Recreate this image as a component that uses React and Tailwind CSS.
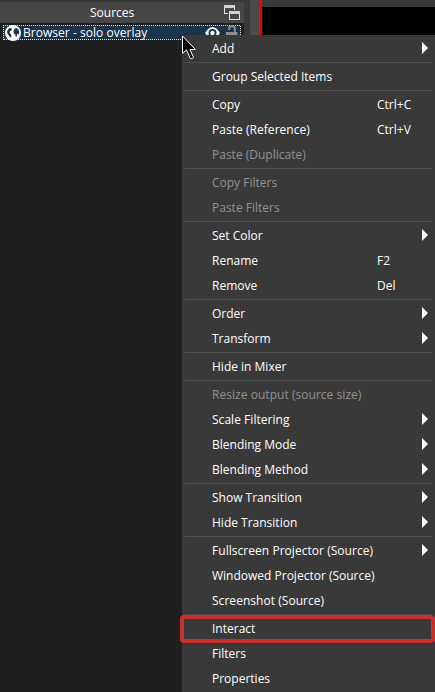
import React from 'react';

const MENU = [
  [{ label: 'Add', sub: true }],
  [{ label: 'Group Selected Items' }],
  [
    { label: 'Copy', keys: 'Ctrl+C' },
    { label: 'Paste (Reference)', keys: 'Ctrl+V', wide: true },
    { label: 'Paste (Duplicate)', disabled: true },
  ],
  [
    { label: 'Copy Filters', disabled: true },
    { label: 'Paste Filters', disabled: true },
  ],
  [
    { label: 'Set Color', sub: true },
    { label: 'Rename', keys: 'F2' },
    { label: 'Remove', keys: 'Del' },
  ],
  [
    { label: 'Order', sub: true },
    { label: 'Transform', sub: true },
  ],
  [{ label: 'Hide in Mixer' }],
  [
    { label: 'Resize output (source size)', disabled: true, wide: true },
    { label: 'Scale Filtering', sub: true, wide: true },
    { label: 'Blending Mode', sub: true },
    { label: 'Blending Method', sub: true },
  ],
  [
    { label: 'Show Transition', sub: true },
    { label: 'Hide Transition', sub: true },
  ],
  [
    { label: 'Fullscreen Projector (Source)', sub: true, wide: true },
    { label: 'Windowed Projector (Source)' },
    { label: 'Screenshot (Source)', wide: true },
  ],
  [
    { label: 'Interact', marked: true },
    { label: 'Filters' },
    { label: 'Properties' },
  ],
];

function MenuItem({ label, keys, sub, disabled, marked, wide }) {
  return (
    <div className={`relative flex h-[25px] items-center pl-[30px] ${disabled ? 'text-[#929292]' : 'text-white'}`}>
      <span className={`w-[165px] whitespace-nowrap ${wide ? 'tracking-[0.04px]' : ''}`}>{label}</span>
      {keys && <span className="whitespace-nowrap">{keys}</span>}
      {sub && (
        <svg className="mr-[7px] mb-px ml-auto h-3 w-[6px]" viewBox="0 0 6 12">
          <path d="M0 0L6 6L0 12Z" fill="#fff" />
        </svg>
      )}
      {marked && (
        <div className="absolute -top-[1px] -left-[2px] h-[28px] w-[255px] rounded-[4px] border-4 border-[#c9302c] shadow-[0_0_1px_#111]" />
      )}
    </div>
  );
}

function ContextMenu() {
  return (
    <div className="absolute top-[35px] left-[182px] h-[657px] w-[253px] bg-[#393939] pt-px">
      {MENU.map((group, i) => (
        <div key={i}>
          {i > 0 && <div className="mr-[3px] ml-[3px] h-[3px] py-px"><div className="h-px bg-[#4f4f4f]" /></div>}
          {group.map((item) => <MenuItem key={item.label} {...item} />)}
        </div>
      ))}
    </div>
  );
}

function GlobeIcon() {
  return (
    <svg className="h-4 w-4 shrink-0" viewBox="0 0 16 16">
      <circle cx="8" cy="8" r="8" fill="#fff" />
      <path d="M2 6.5L3.6 3.8L5.6 3L7 3.8L6.4 5.4L4.8 6.6L4.8 8.2L6.4 9.8L6.2 11.6L5.2 13L4.4 11L2.6 9Z" fill="#19334d" />
      <path d="M8.6 5.4L10 3.4L11.6 3L13.4 4.8L14.2 7.4L13.6 9.4L12.4 8.8L11.8 11.4L10.8 12L10.2 9.2L8.8 8.4Z" fill="#19334d" />
    </svg>
  );
}

function SourcesDock() {
  return (
    <div className="flex h-[692px] w-[244px] flex-col bg-[#1f1f1f]">
      <div className="h-[2px] bg-[#393939]" />
      <div className="bg-[#393939]">
        <div className="flex h-[21px] items-center rounded-t-[3px] bg-[#464646]">
          <span className="ml-[90px]">Sources</span>
          <svg className="mr-1 ml-auto h-4 w-4" viewBox="0 0 16 16">
            <rect x="0.5" y="0.5" width="10" height="8" fill="#464646" stroke="#e3e3e3" />
            <path d="M0 0H11V3H0Z" fill="#d2d2d2" />
            <path d="M4 5H16V16H4Z" fill="#464646" />
            <rect x="5.5" y="6.5" width="10" height="8" fill="#464646" stroke="#e3e3e3" />
            <path d="M5 6H16V9H5Z" fill="#d2d2d2" />
          </svg>
        </div>
      </div>
      <div className="relative mt-[2px] ml-[3px] flex h-[15px] w-[238px] items-center bg-[#19334d]">
        <svg className="absolute inset-0 h-[15px] w-[238px]" viewBox="0 0 238 15">
          <path d="M0 0.5H238M1 14.5H238M0.5 0V15M237.5 1V15" fill="none" stroke="#e0e0e0" strokeDasharray="1 1" />
        </svg>
        <div className="relative ml-[2px] flex items-center">
          <GlobeIcon />
          <span className="ml-[2px] tracking-[0.04px] whitespace-nowrap">Browser - solo overlay</span>
        </div>
        <svg className="absolute top-[2px] left-[202px] h-[12px] w-[15px]" viewBox="0 0 15 12">
          <path d="M0 6Q7.5 -6 15 6Q7.5 18 0 6Z" fill="#fff" />
          <circle cx="7.5" cy="6" r="4" fill="#19334d" />
          <circle cx="7.5" cy="6" r="2.2" fill="#fff" />
        </svg>
        <svg className="absolute top-0 left-[223px] h-[13px] w-3" viewBox="0 0 12 13">
          <path d="M3.2 5V3.6Q3.2 1.1 6 1.1Q8.8 1.1 8.8 3.6V8" fill="none" stroke="#8d8d8d" strokeWidth="2" />
          <path d="M0 7H11.5V13H0Z" fill="#8d8d8d" />
        </svg>
      </div>
    </div>
  );
}

export default function App() {
  return (
    <div className="relative flex h-[692px] w-[435px] overflow-hidden bg-[#393939] font-['Open_Sans','Noto_Sans',sans-serif] text-[12px] leading-[16px] text-white">
      <SourcesDock />
      <div className="ml-[6px] w-[10px] bg-[#4b4b4b]" />
      <div className="w-[2px] bg-[#ff0000]" />
      <div className="flex-1 pt-[7px]"><div className="h-full bg-black" /></div>
      <ContextMenu />
      <svg className="absolute top-[35px] left-[182px] h-[26px] w-[15px]" viewBox="0 0 15 26">
        <path d="M0.5 1V18.5L4.5 14.8L8.3 23.5Q10 24.5 11.5 22.5L8 14.5H13.5Z" fill="#000" stroke="#fff" />
      </svg>
    </div>
  );
}
